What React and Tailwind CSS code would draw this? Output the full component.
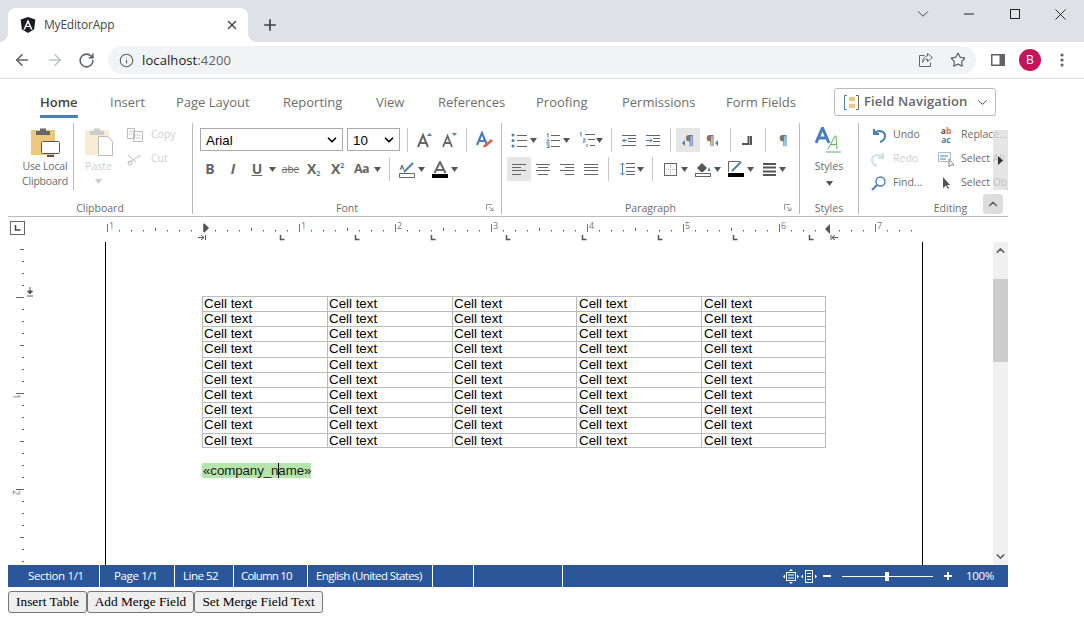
import React from "react";
import { ArrowLeft, ArrowRight, RotateCw, Info, Star, X, Plus, ChevronDown, ChevronUp } from "lucide-react";

const S = ({ w, h, className = "", children }) => (
  <svg width={w} height={h} viewBox={`0 0 ${w} ${h}`} className={"shrink-0 " + className}>{children}</svg>
);
const Caret = ({ className = "", c = "#555" }) => (
  <S w={7} h={5} className={className}><path d="M0 0h7L3.5 5z" fill={c} /></S>
);
const Sep = ({ className = "" }) => <span className={"w-px h-[24px] bg-[#c8c8c8] shrink-0 " + className} />;
const B = "#4a7fb5";
const G = "#666";

const tabs = [
  ["Home", "w-[38px]"], ["Insert", "w-[34px]"], ["Page Layout", "w-[75px]"], ["Reporting", "w-[61px]"], ["View", "w-[30px]"],
  ["References", "w-[66px]"], ["Proofing", "w-[54px]"], ["Permissions", "w-[72px]"], ["Form Fields", "w-[71px]"],
];

function Chrome() {
  return (
    <div className="font-['Open_Sans',sans-serif]">
      <div className="h-[42px] bg-[#dee1e6] flex items-end pl-[8px]">
        <div className="relative w-[240px] h-[34px] bg-white rounded-t-[8px] flex items-center pl-[12px]">
          <span className="absolute left-[-8px] bottom-0 w-[8px] h-[8px] bg-[radial-gradient(circle_at_0_0,transparent_7.5px,white_8px)]" />
          <span className="absolute right-[-8px] bottom-0 w-[8px] h-[8px] bg-[radial-gradient(circle_at_100%_0,transparent_7.5px,white_8px)]" />
          <S w={16} h={16}>
            <path d="M8 0L.7 2.6l1.1 9.6L8 16l6.2-3.8 1.1-9.6z" fill="#1c1c20" />
            <path d="M8 2.2L3.4 12.4h1.7l.9-2.3h3.9l.9 2.3h1.7zM8 6l1.4 2.9H6.6z" fill="#fff" />
          </S>
          <span className="ml-[8px] text-[12px] tracking-[-0.2px] text-[#45474a] w-[181px] shrink-0">MyEditorApp</span>
          <X size={14} strokeWidth={2.4} className="text-[#45474a] shrink-0" />
        </div>
        <Plus size={18} strokeWidth={2.2} className="ml-[13px] mb-[8px] text-[#3c3f43]" />
        <div className="ml-auto self-start h-[28px] flex items-center">
          <ChevronDown size={18} strokeWidth={1.2} className="text-[#333] mr-[32px]" />
          <S w={10} h={2} className="mr-[36px]"><path d="M0 1h10" stroke="#222" /></S>
          <S w={10} h={10} className="mr-[35px]"><rect x=".5" y=".5" width="9" height="9" fill="none" stroke="#222" /></S>
          <S w={11} h={11} className="mr-[18px]"><path d="M.5.5l10 10M10.5.5l-10 10" stroke="#222" /></S>
        </div>
      </div>
      <div className="h-[37px] border-b border-[#dadce0] flex items-center">
        <ArrowLeft size={18} strokeWidth={2.2} className="ml-[13px] text-[#5f6368]" />
        <ArrowRight size={18} strokeWidth={2.2} className="ml-[15px] text-[#bdc1c6]" />
        <RotateCw size={17} strokeWidth={2.2} className="ml-[14px] text-[#5f6368]" />
        <div className="ml-[13px] w-[868px] h-[28px] rounded-full bg-[#f1f3f4] flex items-center pl-[11px]">
          <Info size={15} strokeWidth={1.8} className="text-[#5f6368]" />
          <span className="ml-[8px] mt-[1px] text-[13px] tracking-[0.1px] text-[#202124]">localhost<span className="text-[#5f6368]">:4200</span></span>
          <S w={16} h={16} className="ml-auto">
            <path d="M6.5 3.5H1.5v11h11v-4" fill="none" stroke="#666" />
            <path d="M9.5 1.5l5 4-5 4V7C7 7 5.5 8 4.5 10.5 4.5 7 6.5 4 9.5 4z" fill="none" stroke="#666" />
          </S>
          <Star size={16} strokeWidth={1.8} className="ml-[16px] mr-[10px] text-[#5f6368]" />
        </div>
        <S w={14} h={12} className="ml-[15px]"><rect width="14" height="12" fill="#5f6368" /><rect x="1.5" y="1.5" width="7" height="9" fill="#fff" /></S>
        <span className="ml-[14px] w-[22px] h-[22px] rounded-full bg-[#c4145a] text-white text-[12px] flex items-center justify-center">B</span>
        <S w={4} h={14} className="ml-[19px]"><circle cx="2" cy="2" r="1.6" fill="#5f6368" /><circle cx="2" cy="7" r="1.6" fill="#5f6368" /><circle cx="2" cy="12" r="1.6" fill="#5f6368" /></S>
      </div>
    </div>
  );
}

function Label({ children, launcher }) {
  return (
    <div className="relative mt-auto h-[12px] leading-[12px] text-center text-[10.5px] text-[#6b6b6b]">
      {children}
      {launcher && (
        <S w={8} h={7} className="absolute right-[7px] top-[2px]">
          <path d="M.5 6V.5H6M3 3l4 3.5M7 3.5v3H4" fill="none" stroke="#999" />
        </S>
      )}
    </div>
  );
}

const ClipIcon = ({ faded }) => (
  <S w={24} h={28}>
    <rect y="3" width="24" height="25" fill={faded ? "#f8ecd6" : "#eec77e"} />
    <path d="M5 4h14v4H5zM9 1.500h6v3H9z" fill={faded ? "#ccc" : "#666"} />
  </S>
);

function Clipboard() {
  return (
    <div className="w-[185px] h-[91px] border-r border-[#bbb] flex flex-col">
      <div className="flex">
        <div className="w-[66px] h-[67px] border-r border-[#bbb] flex flex-col items-center pl-[9px] pt-[4px] text-[10.5px] leading-[15px] text-[#6b6b6b] tracking-[-0.2px]">
          <div className="relative w-[30px] h-[29px] ml-[1px]">
            <ClipIcon />
            <S w={20} h={17} className="absolute right-0 bottom-[-2px]">
              <rect x=".5" y=".5" width="18" height="12" rx="1" fill="#fff" stroke="#555" />
              <path d="M6 15h7" stroke="#555" strokeWidth="2" />
            </S>
          </div>
          <span className="mt-[3px] whitespace-nowrap">Use Local</span>
          <span className="whitespace-nowrap">Clipboard</span>
        </div>
        <div className="w-[48px] flex flex-col items-center pt-[4px] text-[10.5px] leading-[15px] text-[#cfcfcf] pl-[1px]">
          <div className="relative w-[28px] h-[29px]">
            <ClipIcon faded />
            <S w={15} h={20} className="absolute right-0 bottom-0">
              <path d="M.5.500h9l5 5v14H.5z" fill="#fff" stroke="#bbb" />
            </S>
          </div>
          <span className="mt-[3px]">Paste</span>
          <Caret c="#ccc" className="mt-[5px]" />
        </div>
        <div className="flex flex-col text-[10.5px] text-[#cfcfcf] ml-[5px]">
          <div className="h-[24px] flex items-center">
            <S w={16} h={14}><path d="M.5.500h7v10h-7zM6.500 3.500h9v10h-9z" fill="#fff" stroke="#bbb" /><path d="M2 3h4M2 6h3M8 7h6M8 10h6" stroke="#ccc" /></S>
            <span className="ml-[8px]">Copy</span>
          </div>
          <div className="h-[24px] flex items-center">
            <S w={16} h={14}><path d="M1 11l13-8M1 3l8 7" stroke="#bbb" fill="none" /><circle cx="3" cy="11" r="2" fill="none" stroke="#bbb" /></S>
            <span className="ml-[8px]">Cut</span>
          </div>
        </div>
      </div>
      <Label>Clipboard</Label>
    </div>
  );
}

function Font() {
  const box = "h-[23px] border border-[#aaa] flex items-center justify-between pl-[5px] pr-[3px] pt-[2px] font-['Liberation_Sans',sans-serif] text-[13.33px] text-black";
  return (
    <div className="w-[309px] h-[91px] border-r border-[#bbb] flex flex-col pt-[5px]">
      <div className="flex items-center h-[23px]">
        <div className={"ml-[7px] w-[143px] " + box}>
          Arial
          <ChevronDown size={14} strokeWidth={3} className="mt-[-2px]" />
        </div>
        <div className={"ml-[4px] w-[53px] " + box}>
          10
          <ChevronDown size={14} strokeWidth={3} className="mt-[-2px]" />
        </div>
        <Sep className="ml-[7px]" />
        <S w={15} h={16} className="ml-[9px]">
          <path d="M1 15L6 3l5 12M3 11h6" fill="none" stroke={G} strokeWidth="2" /><path d="M10 4l2.500-3L15 4z" fill={B} />
        </S>
        <S w={15} h={16} className="ml-[10px]">
          <path d="M1 15L5.500 4l4.500 11M3 11h5" fill="none" stroke={G} strokeWidth="1.800" /><path d="M10 1h5l-2.500 3z" fill={B} />
        </S>
        <Sep className="ml-[9px]" />
        <S w={17} h={17} className="ml-[9px]">
          <path d="M1 14L6 2l5 12M3 10h6" fill="none" stroke={B} strokeWidth="2.200" /><path d="M7 15l8-7 2 2-7 6H7z" fill="#e0694a" />
        </S>
      </div>
      <div className="flex items-center h-[24px] mt-[6px] text-[#666] font-bold text-[13px] leading-none">
        <span className="ml-[11px] w-[12px] text-center text-[14px]">B</span>
        <span className="ml-[13px] w-[8px] text-center italic text-[14px]">I</span>
        <span className="ml-[14px] w-[12px] text-center underline text-[14px]">U</span>
        <Caret className="ml-[6px]" />
        <span className="ml-[5px] w-[19px] text-center text-[10px] font-normal line-through">abe</span>
        <span className="ml-[7px] w-[16px] whitespace-nowrap text-[14px]">X<sub className="text-[7px] text-[#4a7fb5]">2</sub></span>
        <span className="ml-[8px] w-[16px] whitespace-nowrap text-[14px]">X<span className="text-[7px] text-[#4a7fb5] relative top-[-6px]">2</span></span>
        <span className="ml-[7px] w-[16px] text-[12.5px] tracking-[-0.5px]">Aa</span>
        <Caret className="ml-[4px]" />
        <Sep className="ml-[8px]" />
        <S w={16} h={17} className="ml-[9px]">
          <path d="M.5 12.500h15v4H.500z" fill="#fff" stroke={G} /><path d="M5 11l9-9" stroke={B} strokeWidth="2" /><path d="M1 9l2-5 2 5M2 7h2" fill="none" stroke={G} />
        </S>
        <Caret className="ml-[3px]" />
        <S w={16} h={17} className="ml-[7px]">
          <rect y="13" width="16" height="4" fill="#000" /><path d="M2.500 12L8 1l5.500 11M4.500 9h7" fill="none" stroke={G} strokeWidth="2" />
        </S>
        <Caret className="ml-[3px]" />
      </div>
      <Label launcher>Font</Label>
    </div>
  );
}

function Paragraph() {
  return (
    <div className="w-[298px] h-[91px] border-r border-[#bbb] flex flex-col pt-[5px]">
      <div className="flex items-center h-[24px]">
        <S w={16} h={15} className="ml-[9px]">
          <circle cx="2" cy="2" r="1.500" fill={B} /><circle cx="2" cy="7.500" r="1.500" fill={B} /><circle cx="2" cy="13" r="1.500" fill={B} />
          <path d="M6 2.500h10M6 7.500h10M6 13.500h10" stroke={G} />
        </S>
        <Caret className="ml-[3px]" />
        <S w={14} h={15} className="ml-[9px]">
          <path d="M1 1l1-.500v4M.500 7h3L.500 10h3M.500 12h3l-1 1 1 1.500h-3" fill="none" stroke={B} />
          <path d="M5 2.500h9M5 7.500h9M5 13.500h9" stroke={G} />
        </S>
        <Caret className="ml-[3px]" />
        <S w={16} h={16} className="ml-[9px]">
          <path d="M1 1l1-.500v4M4 7h2.500L4 10h2.500M8 12v3" fill="none" stroke={B} />
          <path d="M6 2.500h10M9 7.500h7M11 13.500h5" stroke={G} />
        </S>
        <Caret className="ml-[1px]" />
        <Sep className="ml-[8px]" />
        <S w={14} h={11} className="ml-[10px]">
          <path d="M0 .500h14M6 3.500h8M6 6.500h8M0 10.500h14" stroke={G} /><path d="M5 5.500H0M3 3.500l-2 2 2 2" stroke={B} fill="none" />
        </S>
        <S w={14} h={11} className="ml-[10px]">
          <path d="M0 .500h14M7 3.500h7M7 6.500h7M0 10.500h14" stroke={G} /><path d="M0 5.500h6M4 3.500l2 2-2 2" stroke={B} fill="none" />
        </S>
        <Sep className="ml-[10px]" />
        <span className="ml-[5px] w-[24px] h-[24px] bg-[#e6e6e6] flex items-center justify-center text-[13px] text-[#777] font-bold leading-none">
          <S w={3} h={6} className="mt-[6px]"><path d="M3 0v6L0 3z" fill={B} /></S>¶
        </span>
        <span className="ml-[6px] w-[14px] text-[13px] text-[#777] font-bold leading-none flex items-center whitespace-nowrap">¶<S w={3} h={6} className="mt-[6px]"><path d="M3 0v6L0 3z" fill={B} /></S></span>
        <Sep className="ml-[10px]" />
        <S w={10} h={9} className="ml-[11px]"><path d="M0 8h6M6.500 0v9M9 0v9" stroke="#555" strokeWidth="2" /></S>
        <Sep className="ml-[13px]" />
        <span className="ml-[13px] w-[7px] text-[13px] font-bold text-[#777] leading-none">¶</span>
      </div>
      <div className="flex items-center h-[24px] mt-[5px]">
        <span className="ml-[5px] w-[24px] h-[24px] bg-[#e6e6e6] flex items-center justify-center">
          <S w={14} h={11}><path d="M0 .500h14M0 3.500h9M0 6.500h14M0 10.500h9" stroke={G} /></S>
        </span>
        <S w={14} h={11} className="ml-[5px]"><path d="M0 .500h14M2 3.500h10M0 6.500h14M2 10.500h10" stroke={G} /></S>
        <S w={14} h={11} className="ml-[10px]"><path d="M0 .500h14M5 3.500h9M0 6.500h14M5 10.500h9" stroke={G} /></S>
        <S w={14} h={11} className="ml-[10px]"><path d="M0 .500h14M0 3.500h14M0 6.500h14M0 10.500h14" stroke={G} /></S>
        <Sep className="ml-[10px]" />
        <S w={15} h={14} className="ml-[11px]"><path d="M6 1.500h9M6 5.500h9M6 9.500h9M6 12.500h9" stroke={G} /><path d="M2.500 1v12M.500 3l2-2 2 2M.500 11l2 2 2-2" stroke={B} fill="none" /></S>
        <Caret className="ml-[2px]" />
        <Sep className="ml-[8px]" />
        <S w={13} h={13} className="ml-[11px]"><rect x=".5" y=".5" width="12" height="12" fill="none" stroke={G} /><path d="M6.500 2v9M2 6.500h9" stroke="#aaa" strokeDasharray="1 1" /></S>
        <Caret className="ml-[4px]" />
        <S w={16} h={16} className="ml-[7px]"><rect x=".5" y="12.500" width="15" height="3" fill="#fff" stroke={G} /><path d="M2 7l5-5 5 5-4 4H6z" fill="#555" /><path d="M14 6l1.500 4h-3z" fill={B} /></S>
        <Caret className="ml-[3px]" />
        <S w={16} h={16} className="ml-[7px]"><rect y="12" width="16" height="4" fill="#000" /><path d="M12 .500H.500V11" fill="none" stroke={G} /><path d="M4 10l9-9" stroke={B} strokeWidth="2" /></S>
        <Caret className="ml-[3px]" />
        <S w={13} h={13} className="ml-[9px]"><path d="M0 1h13M0 4.500h13M0 8.500h13M0 12h13" stroke="#555" strokeWidth="2" /></S>
        <Caret className="ml-[3px]" />
      </div>
      <Label launcher>Paragraph</Label>
    </div>
  );
}

function Styles() {
  return (
    <div className="w-[59px] h-[91px] border-r border-[#bbb] flex flex-col items-center pt-[4px] text-[10.5px] text-[#6b6b6b]">
      <S w={26} h={26} className="ml-[-2px]">
        <path d="M1 16L7.500 1 14 16M3.500 11h8" fill="none" stroke={B} strokeWidth="3" />
        <path d="M13 22l7-13h1l1 13M15.500 17.500h6" fill="none" stroke="#5bb55a" />
        <path d="M11 25h15" stroke="#5bb55a" />
      </S>
      <span className="mt-[6px] leading-[15px]">Styles</span>
      <Caret className="mt-[7px]" />
      <Label><span className="w-[59px] block">Styles</span></Label>
    </div>
  );
}

function Editing() {
  return (
    <div className="relative w-[149px] h-[91px] flex flex-col text-[10.5px] text-[#6b6b6b]">
      <div className="flex items-center h-[24px] whitespace-nowrap overflow-hidden">
        <S w={15} h={15} className="ml-[12px]"><path d="M3 1v5h5M3 6c4-5 11-3 11 2 0 3-2 5-5 6" fill="none" stroke={B} strokeWidth="2" /></S>
        <span className="ml-[7px] w-[45px] shrink-0">Undo</span>
        <span className="w-[16px] flex flex-col text-[8.5px] leading-[9px] font-bold text-[#4a7fb5] shrink-0 text-center"><span><span className="text-[#555]">a</span><span className="text-[#e0694a]">b</span></span><span>ac</span></span>
        <span className="ml-[7px]">Replace...</span>
      </div>
      <div className="flex items-center h-[24px] whitespace-nowrap overflow-hidden">
        <S w={15} h={15} className="ml-[12px]"><path d="M12 1v5H7M12 6C8 1 1 3 1 8c0 3 2 5 5 6" fill="none" stroke="#cfdfe9" strokeWidth="2" /></S>
        <span className="ml-[7px] w-[45px] shrink-0 text-[#cfcfcf]">Redo</span>
        <S w={16} h={15}><rect x=".5" y=".5" width="12" height="9" fill="none" stroke={B} strokeDasharray="1 1" /><path d="M2 4h8M2 7h6" stroke={B} /><path d="M11 7v8l2-2h3z" fill="#fff" stroke="#888" /></S>
        <span className="ml-[7px]">Select All</span>
      </div>
      <div className="flex items-center h-[24px] whitespace-nowrap overflow-hidden">
        <S w={15} h={15} className="ml-[12px]"><circle cx="9.500" cy="5.500" r="4.500" fill="none" stroke={B} strokeWidth="1.400" /><path d="M6 9l-5 5" stroke={B} strokeWidth="2" /></S>
        <span className="ml-[7px] w-[45px] shrink-0">Find...</span>
        <S w={16} h={14}><path d="M5 1v11l3-2.500 2 3.500 1-1-2-3h3z" fill="#555" /></S>
        <span className="ml-[7px]">Select Object</span>
      </div>
      <span className="absolute right-0 top-[7px] w-[15px] h-[60px] bg-[#dcdcdc]/75 flex items-center justify-center">
        <S w={5} h={9}><path d="M0 0l5 4.500L0 9z" fill="#333" /></S>
      </span>
      <span className="absolute right-[5px] top-[71px] w-[20px] h-[20px] rounded-[3px] bg-[#dddddd] flex items-center justify-center">
        <ChevronUp size={14} strokeWidth={2} className="text-[#555]" />
      </span>
      <Label><span className="block pl-[34px]">Editing</span></Label>
    </div>
  );
}

function Ribbon() {
  return (
    <div className="font-['Open_Sans',sans-serif]">
      <div className="h-[33px] flex items-start">
        <div className="flex gap-[32px] ml-[32px] text-[13px] text-[#6e6e6e]">
          {tabs.map(([t, w], i) => (
            <div key={t} className={w + " h-[33px] whitespace-nowrap pt-[8px] leading-[18px] " + (i === 0 ? "font-semibold text-[#444] border-b-[3px] border-[#4a7fb5]" : "")}>{t}</div>
          ))}
        </div>
        <div className="ml-[37px] mt-[3px] w-[162px] h-[28px] border border-[#bbb] rounded-[3px] flex items-center pl-[9px] text-[13px] font-semibold text-[#666] tracking-[0.15px]">
          <S w={15} h={15} className="mr-[5px]">
            <path d="M3 .500H.500v14H3" fill="none" stroke={B} /><path d="M12 .500h2.500v14H12" fill="none" stroke="#666" />
            <rect x="5" y="2" width="6" height="4" fill="#eec77e" /><rect x="5" y="9" width="6" height="4" fill="#eec77e" />
          </S>
          Field Navigation
          <ChevronDown size={15} strokeWidth={1.6} className="ml-[7px] text-[#444]" />
        </div>
      </div>
      <div className="h-[99px] pt-[5px] border-b-[1px] border-[#bbb] flex">
        <Clipboard /><Font /><Paragraph /><Styles /><Editing />
      </div>
    </div>
  );
}

function HRuler() {
  const els = [];
  for (let x = 99.5, i = 0; x < 905; x += 12, i++) {
    if (i % 8 === 0) els.push(<path key={x} d={`M${x} 7v8`} stroke="#777" />);
    else if (i % 4 === 0) els.push(<path key={x} d={`M${x} 11v3`} stroke="#666" />);
    else els.push(<path key={x} d={`M${x} 13v1.500`} stroke="#555" />);
  }
  [[1, 101], [1, 293], [2, 389], [3, 485], [4, 581], [5, 677], [6, 773], [7, 869]].forEach(([n, x], i) =>
    els.push(<text key={"t" + i} x={x} y="12" fontSize="9" fill="#777" fontFamily="Open Sans, sans-serif">{n}</text>)
  );
  [272, 347, 423, 498, 574, 650, 725, 801].forEach((x) =>
    els.push(<path key={"l" + x} d={`M${x + .5} 18v4.500h4`} fill="none" stroke="#555" strokeWidth="1.500" />)
  );
  return (
    <div className="h-[25px] flex">
      <S w={1000} h={25}>
        <rect x="2.500" y="4.500" width="14" height="13" fill="#fff" stroke="#666" />
        <path d="M7.500 8v5h5" fill="none" stroke="#444" strokeWidth="1.500" />
        {els}
        <path d="M196 6l5 5-5 5z" fill="#555" />
        <path d="M190 20.500h6M193 18l3 2.500-3 2.500M197.500 18v5" fill="none" stroke="#555" />
        <path d="M822 7l-5 5 5 5z" fill="#555" />
        <path d="M823 18v5M824 20.500h6M827 18l-3 2.500 3 2.500" fill="none" stroke="#555" />
      </S>
    </div>
  );
}

function VRuler() {
  const els = [];
  for (let i = 0, y = 7.5; y < 323; y += 12, i++) {
    const x0 = (i - 4) % 8 === 0 ? 8 : i % 4 === 0 ? 12 : 14;
    els.push(<path key={i} d={`M${x0} ${y}h${16 - x0}`} stroke="#666" />);
  }
  return (
    <div className="w-[97px] h-[323px]">
      <S w={97} h={323}>
        {els}
        <text x="0" y="0" fontSize="9" fill="#777" transform="translate(5 152) rotate(90)" fontFamily="Open Sans, sans-serif">1</text>
        <text x="0" y="0" fontSize="9" fill="#777" transform="translate(5 248) rotate(90)" fontFamily="Open Sans, sans-serif">2</text>
        <path d="M22 45v7M19.500 49l2.500 3 2.500-3zM19 54h6" stroke="#555" fill="#555" />
      </S>
    </div>
  );
}

const rowH = ["h-[15px]", "h-[15px]", "h-[15px]", "h-[16px]", "h-[15px]", "h-[15px]", "h-[15px]", "h-[15px]", "h-[16px]", "h-[14px]"];

function Doc() {
  return (
    <div className="flex h-[323px] overflow-hidden">
      <VRuler />
      <div className="w-[818px] border-x border-black pt-[54px] pl-[96px] font-['Liberation_Sans',sans-serif] text-[13.33px] text-black">
        <table className="border-collapse table-fixed w-[623px]">
          <tbody>
            {rowH.map((h, i) => (
              <tr key={i} className={h}>
                {[125, 125, 124, 125, 124].map((w, j) => (
                  <td key={j} style={{ width: w }} className={"border border-[#bbb] p-0 align-top overflow-hidden whitespace-nowrap " + (i === 9 ? "leading-[13px] " : "leading-[14px] ") + (j > 2 ? "pl-[2px]" : "pl-[1px]")}>Cell text</td>
                ))}
              </tr>
            ))}
          </tbody>
        </table>
        <div className="mt-[15px] relative w-[109px] h-[15px] bg-[#b5e5ac] leading-[15px] pl-[1px] whitespace-nowrap tracking-[-0.1px] text-[#1c1c1c]">
          «company_name»
          <span className="absolute left-[76px] top-0 w-px h-[15px] bg-black" />
        </div>
      </div>
      <div className="w-[70px]" />
      <div className="w-[15px] h-[323px] bg-[#f0f0f0] flex flex-col items-center">
        <ChevronUp size={13} strokeWidth={3} className="mt-[2px] text-[#666]" />
        <div className="w-[15px] h-[83px] mt-[22px] bg-[#cdcdcd]" />
        <ChevronDown size={13} strokeWidth={3} className="mt-auto mb-[2px] text-[#666]" />
      </div>
    </div>
  );
}

const cells = [
  ["Section 1/1", "w-[92px] pl-[20px]"], ["Page 1/1", "w-[75px] pl-[14px]"], ["Line 52", "w-[59px] pl-[8px] tracking-[-0.5px]"],
  ["Column 10", "w-[74px] pl-[7px] tracking-[-0.8px]"], ["English (United States)", "w-[125px] pl-[8px] tracking-[-0.6px]"], ["", "w-[41px]"], ["", "w-[89px]"],
];

function Status() {
  return (
    <div className="h-[22px] bg-[#2b579a] flex items-center text-white text-[11.5px] font-['Open_Sans',sans-serif] tracking-[-0.35px]">
      {cells.map(([t, c], i) => (
        <div key={i} className={c + " h-[22px] border-r border-white flex items-center whitespace-nowrap overflow-hidden"}>{t}</div>
      ))}
      <S w={16} h={15} className="ml-[220px]">
        <path d="M8 0l2 2H6zM8 15l2-2H6zM0 7.500l2-2v4zM16 7.500l-2-2v4z" fill="#fff" />
        <rect x="3.500" y="3.500" width="9" height="8" fill="none" stroke="#fff" /><path d="M5 6h6M5 9h6" stroke="#fff" />
      </S>
      <S w={16} h={13} className="ml-[2px]">
        <path d="M0 6.500l2-2v4zM16 6.500l-2-2v4z" fill="#fff" />
        <rect x="4.500" y=".5" width="7" height="12" fill="none" stroke="#fff" /><path d="M6 3.500h4M6 6.500h4M6 9.500h4" stroke="#fff" />
      </S>
      <span className="ml-[6px] w-[8px] h-[2px] bg-white" />
      <span className="relative ml-[11px] w-[91px] h-px bg-white">
        <span className="absolute left-[43px] top-[-4px] w-[4px] h-[9px] bg-white" />
      </span>
      <S w={8} h={8} className="ml-[11px]"><path d="M4 0v8M0 4h8" stroke="#fff" strokeWidth="2" /></S>
      <span className="ml-[14px]">100%</span>
    </div>
  );
}

function Buttons() {
  const b = "h-[22px] border border-[#767676] rounded-[3px] bg-[#efefef] font-['Liberation_Serif',serif] text-[13.33px] text-black whitespace-nowrap flex items-center justify-center";
  return (
    <div className="flex mt-[4px]">
      <button className={b + " w-[79px]"}>Insert Table</button>
      <button className={b + " w-[107px]"}>Add Merge Field</button>
      <button className={b + " w-[129px]"}>Set Merge Field Text</button>
    </div>
  );
}

export default function App() {
  return (
    <div className="w-[1084px] h-[641px] bg-white overflow-hidden">
      <Chrome />
      <div className="pt-[6px] pl-[8px] w-[1008px]">
        <Ribbon />
        <HRuler />
        <Doc />
        <Status />
        <Buttons />
      </div>
    </div>
  );
}
